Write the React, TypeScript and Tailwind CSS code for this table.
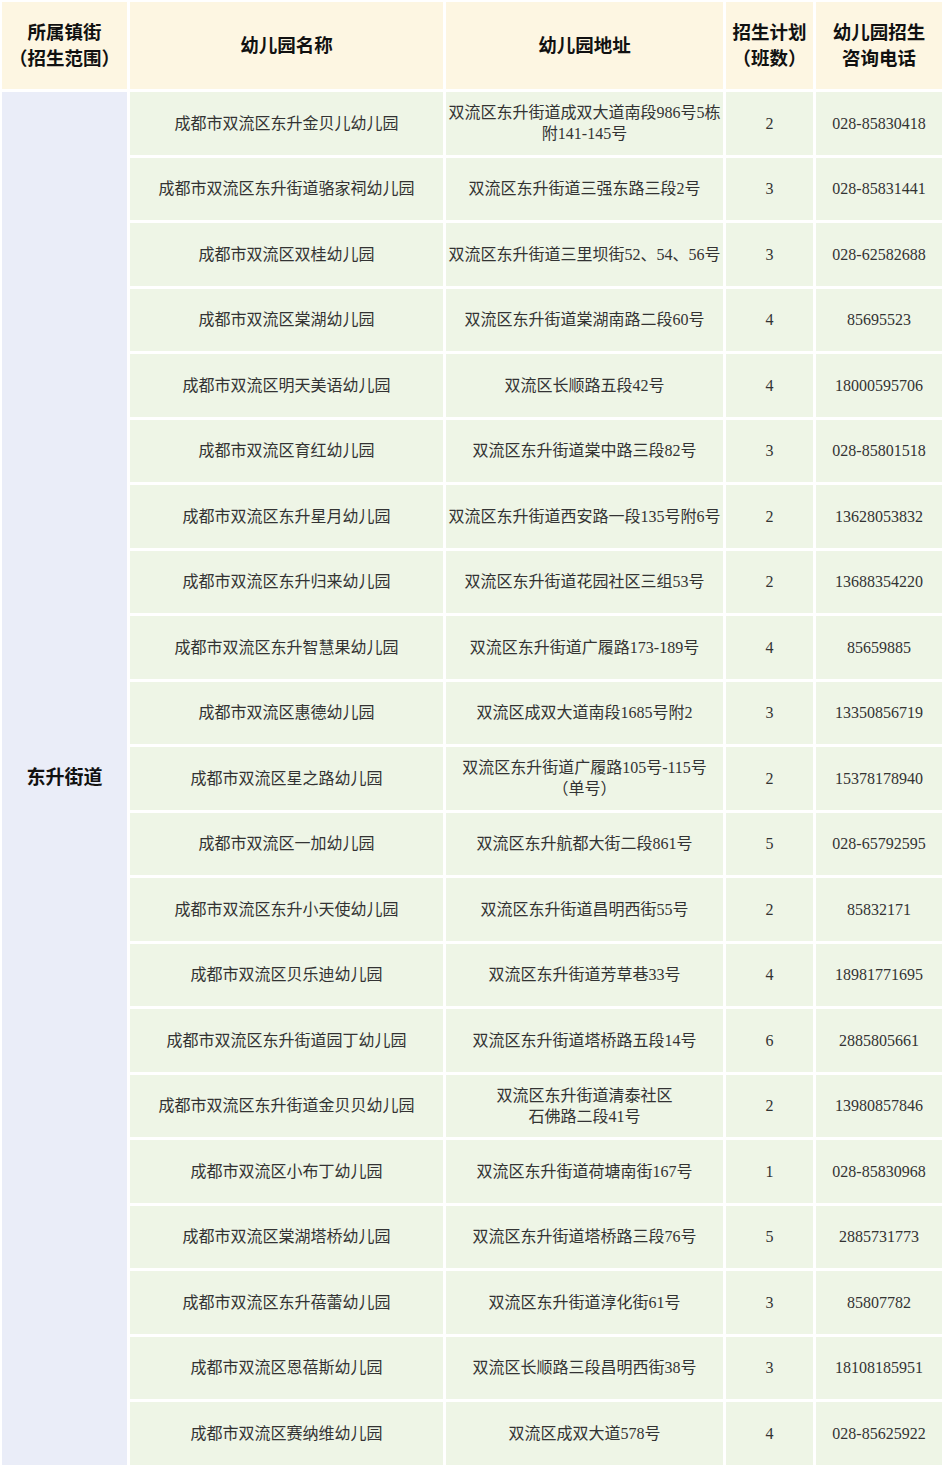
import React from 'react'

const rows: [string, string, string, string][] = [
  ['成都市双流区东升金贝儿幼儿园', '双流区东升街道成双大道南段986号5栋\n附141-145号', '2', '028-85830418'],
  ['成都市双流区东升街道骆家祠幼儿园', '双流区东升街道三强东路三段2号', '3', '028-85831441'],
  ['成都市双流区双桂幼儿园', '双流区东升街道三里坝街52、54、56号', '3', '028-62582688'],
  ['成都市双流区棠湖幼儿园', '双流区东升街道棠湖南路二段60号', '4', '85695523'],
  ['成都市双流区明天美语幼儿园', '双流区长顺路五段42号', '4', '18000595706'],
  ['成都市双流区育红幼儿园', '双流区东升街道棠中路三段82号', '3', '028-85801518'],
  ['成都市双流区东升星月幼儿园', '双流区东升街道西安路一段135号附6号', '2', '13628053832'],
  ['成都市双流区东升归来幼儿园', '双流区东升街道花园社区三组53号', '2', '13688354220'],
  ['成都市双流区东升智慧果幼儿园', '双流区东升街道广履路173-189号', '4', '85659885'],
  ['成都市双流区惠德幼儿园', '双流区成双大道南段1685号附2', '3', '13350856719'],
  ['成都市双流区星之路幼儿园', '双流区东升街道广履路105号-115号\n（单号）', '2', '15378178940'],
  ['成都市双流区一加幼儿园', '双流区东升航都大街二段861号', '5', '028-65792595'],
  ['成都市双流区东升小天使幼儿园', '双流区东升街道昌明西街55号', '2', '85832171'],
  ['成都市双流区贝乐迪幼儿园', '双流区东升街道芳草巷33号', '4', '18981771695'],
  ['成都市双流区东升街道园丁幼儿园', '双流区东升街道塔桥路五段14号', '6', '2885805661'],
  ['成都市双流区东升街道金贝贝幼儿园', '双流区东升街道清泰社区\n石佛路二段41号', '2', '13980857846'],
  ['成都市双流区小布丁幼儿园', '双流区东升街道荷塘南街167号', '1', '028-85830968'],
  ['成都市双流区棠湖塔桥幼儿园', '双流区东升街道塔桥路三段76号', '5', '2885731773'],
  ['成都市双流区东升蓓蕾幼儿园', '双流区东升街道淳化街61号', '3', '85807782'],
  ['成都市双流区恩蓓斯幼儿园', '双流区长顺路三段昌明西街38号', '3', '18108185951'],
  ['成都市双流区赛纳维幼儿园', '双流区成双大道578号', '4', '028-85625922'],
]

const font = { fontFamily: '"Liberation Serif", "Noto Sans CJK SC", serif' }

function Head({ children }: { children: React.ReactNode }) {
  return (
    <div className="flex items-center justify-center bg-[#fdf6e2] text-center text-[18.5px] font-bold leading-[26px] text-[#111]">
      {children}
    </div>
  )
}

function Cell({ text }: { text: string }) {
  return (
    <div className="flex items-center justify-center whitespace-pre-line bg-[#eef5e6] text-center text-[16px] leading-[21px] text-[#333]">
      {text}
    </div>
  )
}

export default function App() {
  return (
    <div className="min-h-[1466px] w-[944px] bg-white p-[2px]" style={font}>
      <div className="grid grid-cols-[125px_313px_277px_87px_126px] grid-rows-[87px] auto-rows-[62.5px] gap-[3px]">
        <Head>
          所属镇街
          <br />
          （招生范围）
        </Head>
        <Head>幼儿园名称</Head>
        <Head>幼儿园地址</Head>
        <Head>
          招生计划
          <br />
          （班数）
        </Head>
        <Head>
          幼儿园招生
          <br />
          咨询电话
        </Head>
        <div className="row-[span_21/span_21] flex items-center justify-center bg-[#eaedf8] text-[19px] font-bold text-[#111]">
          东升街道
        </div>
        {rows.map((r, i) => (
          <React.Fragment key={i}>
            <Cell text={r[0]} />
            <Cell text={r[1]} />
            <Cell text={r[2]} />
            <Cell text={r[3]} />
          </React.Fragment>
        ))}
      </div>
    </div>
  )
}
